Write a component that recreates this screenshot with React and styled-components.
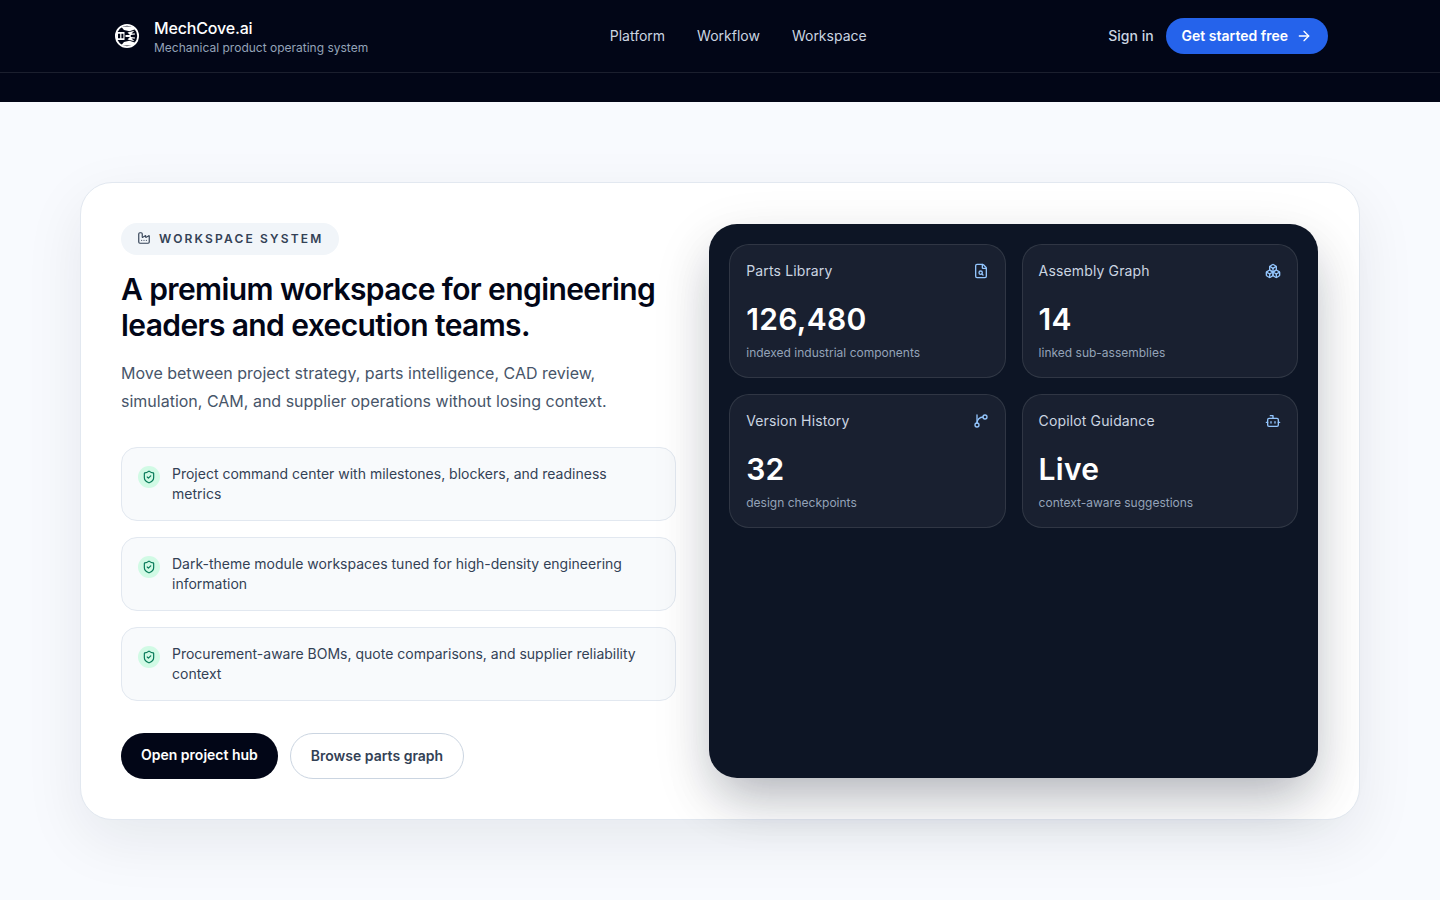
import styled, { createGlobalStyle } from 'styled-components';
import { ArrowRight, Bot, Boxes, Factory, FileSearch, ShieldCheck } from 'lucide-react';

const GlobalStyle = createGlobalStyle`
  html, body {
    margin: 0;
    padding: 0;
    background: #f8fafe;
    font-family: Inter, "Liberation Sans", sans-serif;
  }
  * { box-sizing: border-box; }
`;

const Page = styled.div`
  min-height: 900px;
  background: #f8fafe;
`;

const Top = styled.div`
  height: 102px;
  background: #020617;
`;

const Header = styled.header`
  height: 73px;
  border-bottom: 1px solid rgba(255, 255, 255, 0.1);
`;

const HeaderInner = styled.div`
  width: 1280px;
  height: 72px;
  margin: 0 auto;
  padding: 0 32px;
  display: flex;
  align-items: center;
  justify-content: space-between;
`;

const Brand = styled.div`
  display: flex;
  align-items: center;
  gap: 12px;
`;

const LogoBox = styled.span`
  width: 30px;
  display: flex;
  justify-content: center;
`;

const BrandName = styled.div`
  font-size: 16px;
  line-height: 24px;
  font-weight: 500;
  letter-spacing: -0.01em;
  color: #fff;
`;

const BrandSub = styled.div`
  font-size: 12px;
  line-height: 16px;
  color: #94a3b8;
`;

const Nav = styled.nav`
  display: flex;
  gap: 32px;
`;

const NavLink = styled.a`
  font-size: 14px;
  line-height: 20px;
  color: #cbd5e1;
`;

const Actions = styled.div`
  display: flex;
  align-items: center;
  gap: 12px;
`;

const SignIn = styled.a`
  font-size: 14px;
  line-height: 20px;
  font-weight: 500;
  color: #cbd5e1;
`;

const Cta = styled.button`
  height: 36px;
  padding: 0 16px;
  display: flex;
  align-items: center;
  gap: 8px;
  border: 0;
  border-radius: 999px;
  background: #2563eb;
  color: #fff;
  font: 600 14px/20px Inter, sans-serif;
`;

const Main = styled.main`
  padding: 80px 80px 80px;
`;

const Hero = styled.section`
  display: grid;
  grid-template-columns: 1fr 1.1fr;
  gap: 32px;
  height: 638px;
  padding: 40px;
  background: #fff;
  border: 1px solid #e2e8f0;
  border-radius: 32px;
  box-shadow: 0 20px 60px rgba(15, 23, 42, 0.08);
`;

const Left = styled.div`
  display: flex;
  flex-direction: column;
  align-items: flex-start;
`;

const Badge = styled.div`
  height: 32px;
  padding: 0 16px 2px;
  display: flex;
  align-items: center;
  gap: 8px;
  border-radius: 999px;
  background: #f1f5f9;
  color: #334155;
  font-size: 12px;
  font-weight: 600;
  letter-spacing: 0.18em;
`;

const Title = styled.h1`
  margin: 16px 0 0;
  font-size: 30px;
  line-height: 36px;
  font-weight: 600;
  letter-spacing: -0.02em;
  color: #020617;
`;

const Lead = styled.p`
  margin: 16px 0 0;
  font-size: 16px;
  line-height: 28px;
  color: #475569;
`;

const Points = styled.div`
  align-self: stretch;
  margin-top: 32px;
  display: flex;
  flex-direction: column;
  gap: 16px;
`;

const Point = styled.div`
  display: flex;
  align-items: flex-start;
  gap: 12px;
  padding: 16px;
  background: #f8fafc;
  border: 1px solid #e2e8f0;
  border-radius: 16px;
`;

const PointIcon = styled.span`
  flex: none;
  width: 22px;
  height: 22px;
  margin-top: 2px;
  display: flex;
  align-items: center;
  justify-content: center;
  border-radius: 50%;
  background: #d1fae5;
  color: #047857;
`;

const PointText = styled.div`
  font-size: 14px;
  line-height: 20px;
  color: #334155;
`;

const Buttons = styled.div`
  margin-top: 32px;
  display: flex;
  gap: 12px;
`;

const Button = styled.button`
  height: 46px;
  padding: ${(p) => (p.$primary ? '0 20px 2px' : '0 20px')};
  border-radius: 999px;
  font: 600 14px/20px Inter, sans-serif;
  border: ${(p) => (p.$primary ? '0' : '1px solid #cbd5e1')};
  background: ${(p) => (p.$primary ? '#020617' : '#fff')};
  color: ${(p) => (p.$primary ? '#fff' : '#334155')};
`;

const Panel = styled.div`
  align-self: start;
  height: 554px;
  margin: 1px;
  padding: 20px;
  display: grid;
  grid-template-columns: 1fr 1fr;
  grid-auto-rows: 134px;
  gap: 16px;
  background: #0d1525;
  border-radius: 28px;
  box-shadow: 0 25px 50px -12px rgba(15, 23, 42, 0.25), 0 20px 60px rgba(15, 23, 42, 0.12);
`;

const Stat = styled.div`
  padding: 16px;
  background: rgba(255, 255, 255, 0.05);
  border: 1px solid rgba(255, 255, 255, 0.1);
  border-radius: 20px;
`;

const StatHead = styled.div`
  display: flex;
  align-items: center;
  justify-content: space-between;
  height: 20px;
  color: #93c5fd;
`;

const StatLabel = styled.span`
  font-size: 14px;
  line-height: 20px;
  letter-spacing: 0.01em;
  color: #cbd5e1;
`;

const StatValue = styled.div`
  margin-top: 20px;
  font-size: 30px;
  line-height: 36px;
  font-weight: 600;
  letter-spacing: 0.01em;
  color: #fff;
`;

const StatNote = styled.div`
  margin-top: 8px;
  font-size: 12px;
  line-height: 16px;
  color: #94a3b8;
`;

const Logo = () => (
  <svg width="24" height="24" viewBox="0 0 24 24" fill="none">
    <circle cx="12" cy="12" r="11.1" stroke="#fff" strokeWidth="1.8" fill="#020617" />
    <path d="M6 2.5 L18 2.5 L21 5 L14.5 7.2 L9 6 Z" fill="#fff" />
    <path d="M6 21.5 L18 21.5 L21 19 L14.5 16.8 L9 18 Z" fill="#fff" />
    <path d="M1.5 8 H9.5 V16 H1.5 Z" fill="#fff" />
    <path d="M3 9.8 H5.2 V14.2 H3 Z M6.4 9.8 H8.4 V14.2 H6.4 Z" fill="#020617" />
    <path d="M10.5 11 H15 L12.5 8.5 L19.5 6.8 L16.5 9.4 L20 9.4 L20 10.6 L15.8 11 L15.8 13 L20 13.4 L20 14.6 L16.5 14.6 L19.5 17.2 L12.5 15.5 L15 13 H10.5 Z" fill="#fff" />
  </svg>
);

// curve runs from the top circle back to the stem
const BranchIcon = ({ size }) => (
  <svg width={size} height={size} viewBox="0 0 24 24" fill="none" stroke="currentColor" strokeWidth="2" strokeLinecap="round" strokeLinejoin="round">
    <path d="M6 3v12" />
    <circle cx="18" cy="6" r="3" />
    <circle cx="6" cy="18" r="3" />
    <path d="M15 6a9 9 0 0 0-9 9" />
  </svg>
);

const points = [
  'Project command center with milestones, blockers, and readiness metrics',
  'Dark-theme module workspaces tuned for high-density engineering information',
  'Procurement-aware BOMs, quote comparisons, and supplier reliability context',
];

const stats = [
  { label: 'Parts Library', value: '126,480', note: 'indexed industrial components', Icon: FileSearch },
  { label: 'Assembly Graph', value: '14', note: 'linked sub-assemblies', Icon: Boxes },
  { label: 'Version History', value: '32', note: 'design checkpoints', Icon: BranchIcon },
  { label: 'Copilot Guidance', value: 'Live', note: 'context-aware suggestions', Icon: Bot },
];

export default function App() {
  return (
    <Page>
      <GlobalStyle />
      <Top>
        <Header>
          <HeaderInner>
            <Brand>
              <LogoBox>
                <Logo />
              </LogoBox>
              <div>
                <BrandName>MechCove.ai</BrandName>
                <BrandSub>Mechanical product operating system</BrandSub>
              </div>
            </Brand>
            <Nav>
              <NavLink>Platform</NavLink>
              <NavLink>Workflow</NavLink>
              <NavLink>Workspace</NavLink>
            </Nav>
            <Actions>
              <SignIn>Sign in</SignIn>
              <Cta>
                Get started free
                <ArrowRight size={16} />
              </Cta>
            </Actions>
          </HeaderInner>
        </Header>
      </Top>
      <Main>
        <Hero>
          <Left>
            <Badge>
              <Factory size={14} />
              WORKSPACE SYSTEM
            </Badge>
            <Title>A premium workspace for engineering leaders and execution teams.</Title>
            <Lead>
              Move between project strategy, parts intelligence, CAD review, simulation, CAM, and supplier operations without losing context.
            </Lead>
            <Points>
              {points.map((text) => (
                <Point key={text}>
                  <PointIcon>
                    <ShieldCheck size={14} />
                  </PointIcon>
                  <PointText>{text}</PointText>
                </Point>
              ))}
            </Points>
            <Buttons>
              <Button $primary>Open project hub</Button>
              <Button>Browse parts graph</Button>
            </Buttons>
          </Left>
          <Panel>
            {stats.map(({ label, value, note, Icon }) => (
              <Stat key={label}>
                <StatHead>
                  <StatLabel>{label}</StatLabel>
                  <Icon size={16} />
                </StatHead>
                <StatValue>{value}</StatValue>
                <StatNote>{note}</StatNote>
              </Stat>
            ))}
          </Panel>
        </Hero>
      </Main>
    </Page>
  );
}
